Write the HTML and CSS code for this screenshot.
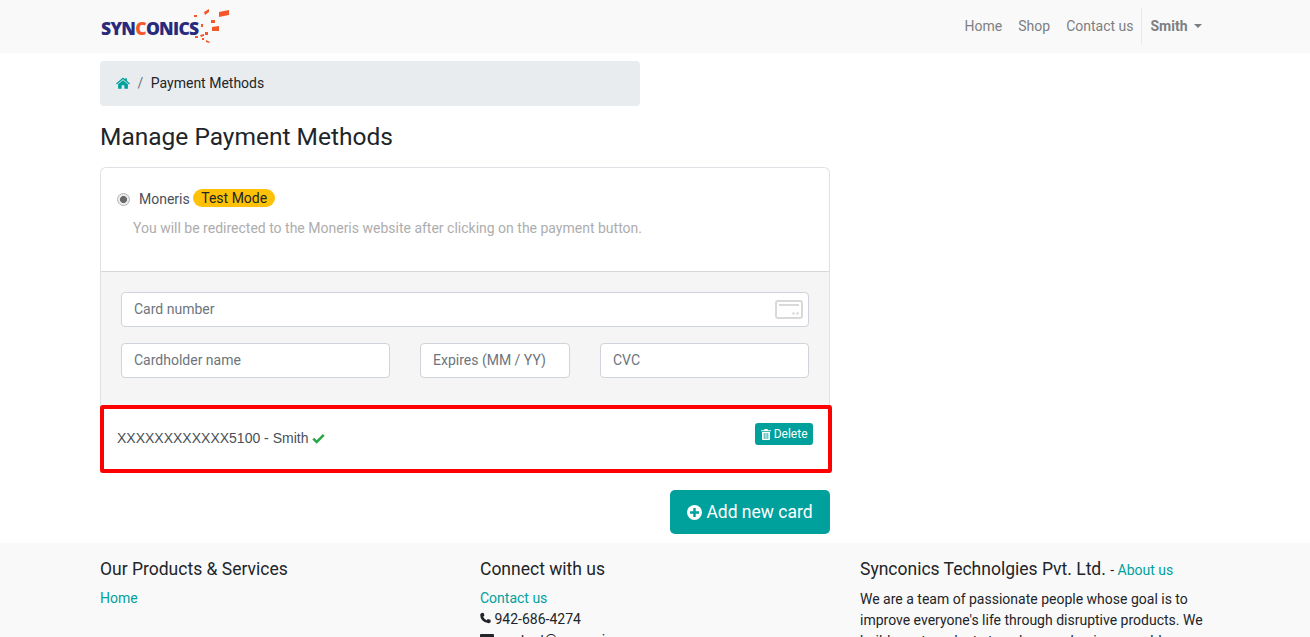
FILE: index.html
```html
<!DOCTYPE html>
<html lang="en">
<head>
  <meta charset="UTF-8" />
  <title>Manage Payment Methods</title>
  <link rel="stylesheet" href="styles.css">
</head>
<body>
  <header class="navbar">
    <div class="container nav-inner">
      <a class="logo" href="#">
        <span class="logo-text">SYN<span class="logo-c">C</span>ONICS</span>
        <svg class="logo-mark" width="42" height="36" viewBox="0 0 42 36">
          <g fill="#f4572a">
            <polygon points="29,3 39,1 39,6 29,8"/>
            <polygon points="14,3 19,0 19,3 15,6"/>
            <rect x="4" y="6" width="3" height="2"/>
            <rect x="21" y="11" width="4" height="3"/>
            <rect x="11" y="15" width="2" height="3"/>
            <polygon points="22,18 29,17 29,22 22,22"/>
            <rect x="15" y="23" width="3" height="3"/>
            <polygon points="10,26 14,25 14,27 11,28"/>
            <rect x="5" y="27" width="3" height="2"/>
            <rect x="12" y="29" width="2" height="2"/>
            <polygon points="16,31 20,33 19,34 16,33"/>
          </g>
        </svg>
      </a>
      <nav class="nav-links">
        <a href="#">Home</a>
        <a href="#">Shop</a>
        <a href="#">Contact us</a>
        <span class="nav-divider"></span>
        <a class="nav-user" href="#">Smith <span class="caret"></span></a>
      </nav>
    </div>
  </header>

  <main class="container">
    <div class="breadcrumb">
      <svg class="home-icon" width="14" height="12" viewBox="0 0 16 13">
        <path fill="#00a09d" d="M8 0.2 L10.4 2.3 V1 H12.4 V4 L16 7 L15 8.1 L8 2.2 L1 8.1 L0 7 Z M8 3.4 L13.6 8 V13 H9.5 V9 H6.5 V13 H2.4 V8 Z"/>
      </svg>
      <span class="crumb-sep">/</span>
      <span>Payment Methods</span>
    </div>

    <h3 class="page-title">Manage Payment Methods</h3>

    <div class="pay-card">
      <div class="pay-option">
        <div class="pay-line">
          <input class="pay-radio" type="radio" checked>
          <span>Moneris</span>
          <span class="badge-test">Test Mode</span>
        </div>
        <p class="pay-help">You will be redirected to the Moneris website after clicking on the payment button.</p>
      </div>

      <form class="card-form">
        <div class="field field-number">
          <input type="text" placeholder="Card number">
          <svg class="card-icon" width="28" height="19" viewBox="0 0 28 19">
            <rect x="1" y="1" width="26" height="17" rx="2" fill="#fff" stroke="#d9d9d9" stroke-width="2"/>
            <rect x="4" y="4" width="20" height="2" fill="#d9d9d9"/>
            <circle cx="18.5" cy="13.5" r="1.3" fill="#d9d9d9"/>
            <circle cx="22.5" cy="13.5" r="1.3" fill="#d9d9d9"/>
          </svg>
        </div>
        <div class="form-row">
          <input class="input-name" type="text" placeholder="Cardholder name">
          <input class="input-exp" type="text" placeholder="Expires (MM / YY)">
          <input class="input-cvc" type="text" placeholder="CVC">
        </div>
      </form>

      <div class="saved-card">
        <span class="saved-label">XXXXXXXXXXXX5100 - Smith
          <svg class="check-icon" width="13" height="10" viewBox="0 0 14 11">
            <path fill="#28a745" d="M5 10.8 L0.2 6 L2.2 4 L5 6.8 L11.8 0 L13.8 2 Z"/>
          </svg>
        </span>
        <a class="btn-delete" href="#">
          <svg width="10" height="11" viewBox="0 0 10 11">
            <path fill="#fff" d="M3.5 0 H6.5 L7 1.2 H10 V2.3 H0 V1.2 H3 Z M1 3 H9 V10 Q9 11 8 11 H2 Q1 11 1 10 Z"/>
            <path stroke="#00a09d" stroke-width="0.8" d="M3.2 4 V10 M5 4 V10 M6.8 4 V10"/>
          </svg>
          Delete
        </a>
      </div>
    </div>

    <div class="add-row">
      <a class="btn-add" href="#">
        <svg width="15" height="15" viewBox="0 0 16 16">
          <circle cx="8" cy="8" r="8" fill="#fff"/>
          <path fill="#00a09d" d="M6.7 3.2 H9.3 V6.7 H12.8 V9.3 H9.3 V12.8 H6.7 V9.3 H3.2 V6.7 H6.7 Z"/>
        </svg>
        Add new card
      </a>
    </div>
  </main>

  <footer class="footer">
    <div class="container footer-grid">
      <div>
        <h5>Our Products &amp; Services</h5>
        <ul class="footer-list">
          <li><a href="#">Home</a></li>
        </ul>
      </div>
      <div>
        <h5>Connect with us</h5>
        <ul class="footer-list">
          <li><a href="#">Contact us</a></li>
          <li>
            <svg width="11" height="12" viewBox="0 0 12 12">
              <path fill="#212529" d="M2.6 0.2 L4.2 0.8 L4.8 3.4 L3.5 4.6 Q4.5 6.9 7.2 8.5 L8.5 7.2 L11.2 7.8 L11.8 9.6 Q11.4 11.6 9.6 11.8 Q5 11.4 2.4 8.4 Q0.2 5.6 0.2 2.4 Q0.4 0.6 2.6 0.2 Z"/>
            </svg>
            942-686-4274
          </li>
          <li>
            <svg width="14" height="11" viewBox="0 0 14 11">
              <rect width="14" height="11" rx="1" fill="#212529"/>
            </svg>
            contact@synconics.com
          </li>
        </ul>
      </div>
      <div>
        <h5>Synconics Technolgies Pvt. Ltd. <small>- <a href="#">About us</a></small></h5>
        <p>We are a team of passionate people whose goal is to improve everyone's life through disruptive products. We build great products to solve your business problems.</p>
      </div>
    </div>
  </footer>
</body>
</html>
```

FILE: styles.css
```css
html, body {
  height: 637px;
  overflow: hidden;
}

body {
  font-family: Roboto, "Noto Sans", sans-serif;
  font-size: 14px;
  line-height: 21px;
  color: #212529;
  background-color: white;
  margin: 0;
}

a {
  color: #00a09d;
  text-decoration: none;
}

.container {
  width: 1110px;
  margin: 0 auto;
}

/* barra de cima */
.navbar {
  background-color: #f9f9f9;
  height: 53px;
}

.nav-inner {
  display: flex;
  justify-content: space-between;
  align-items: center;
  height: 53px;
}

.logo {
  display: flex;
  align-items: center;
  position: relative;
  width: 130px;
  height: 53px;
}

.logo-text {
  font-family: "Open Sans", sans-serif;
  font-weight: 800;
  font-size: 17.5px;
  letter-spacing: -0.7px;
  color: #2a2a7c;
  margin-top: 3px;
  margin-left: 1px;
}

.logo-c {
  color: #f4572a;
}

.logo-mark {
  position: absolute;
  left: 90px;
  top: 9px;
}

.nav-links {
  display: flex;
  align-items: center;
}

.nav-links a {
  color: #7c7f82;
  padding: 0 8px;
}

.nav-divider {
  width: 1px;
  height: 37px;
  background-color: #e9e9e9;
}

.nav-links .nav-user {
  font-weight: 700;
}

.caret {
  display: inline-block;
  border-top: 4px solid #7c7f82;
  border-left: 4px solid transparent;
  border-right: 4px solid transparent;
  margin-left: 3px;
  vertical-align: 3px;
}

/* breadcrumb */
.breadcrumb {
  display: flex;
  align-items: center;
  width: 540px;
  height: 45px;
  box-sizing: border-box;
  margin-top: 8px;
  padding: 0 16px;
  background-color: #e9ecef;
  border-radius: 4px;
}

.home-icon {
  margin-top: -1px;
}

.crumb-sep {
  color: #6c757d;
  padding: 0 7.5px;
}

.page-title {
  font-size: 24.5px;
  font-weight: 400;
  line-height: 29px;
  margin: 16px 0 16px;
}

/* cartao de pagamento */
.pay-card {
  width: 730px;
  box-sizing: border-box;
  border: 1px solid #dee2e6;
  border-bottom: none;
  border-radius: 6px 6px 0 0;
}

.pay-option {
  height: 104px;
  box-sizing: border-box;
  padding: 21px 16px 0;
  border-bottom: 1px solid #d8d8d8;
  color: #495057;
}

.pay-line {
  display: flex;
  align-items: center;
  height: 21px;
}

.pay-radio {
  appearance: none;
  width: 13px;
  height: 13px;
  margin: 0 9px 0 0;
  border: 1px solid #b5b5b5;
  border-radius: 50%;
  background: radial-gradient(circle, #6a6a6a 0, #6a6a6a 3.2px, #ececec 3.8px);
}

.badge-test {
  color: #212529;
  background-color: #ffc107;
  border-radius: 10px;
  padding: 0 8px;
  margin-left: 3.5px;
  margin-top: -4px;
  height: 18px;
  line-height: 18px;
}

.pay-help {
  color: #adadad;
  margin: 8px 0 0 16px;
}

.card-form {
  background-color: #f5f5f5;
  height: 133px;
  box-sizing: border-box;
  padding: 20px 20px 0;
}

.card-form input {
  height: 35px;
  box-sizing: border-box;
  border: 1px solid #ced4da;
  border-radius: 4px;
  padding: 0 12px 2px;
  font-family: inherit;
  font-size: 14px;
  background-color: white;
}

.card-form input::placeholder {
  color: #6c757d;
}

.field-number {
  position: relative;
}

.field-number input {
  width: 100%;
  display: block;
}

.card-icon {
  position: absolute;
  right: 6.5px;
  top: 8px;
}

.form-row {
  display: flex;
  margin-top: 16px;
}

.input-name {
  width: 269px;
}

.input-exp {
  width: 150px;
  margin-left: 30px;
}

.input-cvc {
  width: 209px;
  margin-left: 30px;
}

.saved-card {
  display: flex;
  justify-content: space-between;
  align-items: flex-start;
  width: 732px;
  height: 68px;
  box-sizing: border-box;
  margin-left: -1px;
  padding: 14px 15px 0 13px;
  border: 4px solid red;
  border-radius: 3px;
  background-color: white;
}

.saved-label {
  font-family: "Liberation Sans", Arial, sans-serif;
  color: #495057;
  margin-top: 5px;
}

.check-icon {
  vertical-align: -1px;
}

.btn-delete {
  display: flex;
  align-items: center;
  gap: 3px;
  height: 22px;
  padding: 0 5.5px;
  font-size: 12px;
  color: white;
  background-color: #00a09d;
  border-radius: 3px;
}

.add-row {
  display: flex;
  justify-content: flex-end;
  width: 730px;
  margin-top: 17px;
}

.btn-add {
  display: flex;
  align-items: center;
  justify-content: center;
  gap: 4px;
  width: 160px;
  height: 44px;
  font-size: 17.5px;
  color: white;
  background-color: #00a09d;
  border-radius: 5px;
}

/* rodape */
.footer {
  background-color: #f9f9f9;
  margin-top: 9px;
  padding-top: 16px;
}

.footer-grid {
  display: grid;
  grid-template-columns: 380px 380px 350px;
}

.footer h5 {
  font-size: 17.5px;
  font-weight: 400;
  line-height: 21px;
  margin: 0 0 8px;
}

.footer small {
  font-size: 14px;
}

.footer-list {
  list-style: none;
  margin: 0;
  padding: 0;
}

.footer p {
  margin: 0;
}
```
